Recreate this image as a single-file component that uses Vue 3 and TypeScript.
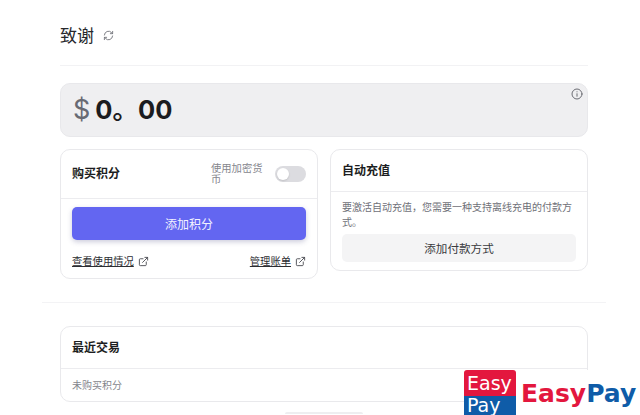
<script setup lang="ts">
const usageLabel: string = '查看使用情况'
const billingLabel: string = '管理账单'
</script>

<template>
  <div class="page">
    <div class="content">
      <header class="head">
        <h1 class="title">致谢</h1>
        <svg class="refresh" viewBox="0 0 24 24" fill="none" stroke="currentColor" stroke-width="2" stroke-linecap="round" stroke-linejoin="round">
          <path d="M3 11a9 9 0 0 1 15.5-5.5L21 8" />
          <path d="M21 3v5h-5" />
          <path d="M21 13a9 9 0 0 1-15.5 5.5L3 16" />
          <path d="M3 21v-5h5" />
        </svg>
      </header>

      <section class="balance">
        <span class="currency">$</span>
        <span class="amount">0。00</span>
        <svg class="info" viewBox="0 0 24 24" fill="none" stroke="currentColor" stroke-width="2" stroke-linecap="round">
          <circle cx="12" cy="12" r="10" />
          <path d="M12 11.5v5" />
          <path d="M12 7.5v.2" />
        </svg>
      </section>

      <div class="cards">
        <section class="card">
          <div class="card-head buy-head">
            <h2 class="card-title">购买积分</h2>
            <div class="crypto">
              <span class="crypto-label">使用加密货币</span>
              <span class="switch"><span class="knob"></span></span>
            </div>
          </div>
          <div class="buy-body">
            <button class="primary" type="button">添加积分</button>
            <div class="links">
              <a class="link">
                <span class="link-text">{{ usageLabel }}</span>
                <svg class="ext" viewBox="0 0 24 24" fill="none" stroke="currentColor" stroke-width="2" stroke-linecap="round" stroke-linejoin="round">
                  <path d="M18 13v6a2 2 0 0 1-2 2H5a2 2 0 0 1-2-2V8a2 2 0 0 1 2-2h6" />
                  <path d="M15 3h6v6" />
                  <path d="M10 14 21 3" />
                </svg>
              </a>
              <a class="link">
                <span class="link-text">{{ billingLabel }}</span>
                <svg class="ext" viewBox="0 0 24 24" fill="none" stroke="currentColor" stroke-width="2" stroke-linecap="round" stroke-linejoin="round">
                  <path d="M18 13v6a2 2 0 0 1-2 2H5a2 2 0 0 1-2-2V8a2 2 0 0 1 2-2h6" />
                  <path d="M15 3h6v6" />
                  <path d="M10 14 21 3" />
                </svg>
              </a>
            </div>
          </div>
        </section>

        <section class="card auto-card">
          <div class="card-head auto-head">
            <h2 class="card-title">自动充值</h2>
          </div>
          <div class="auto-body">
            <p class="auto-text">要激活自动充值，您需要一种支持离线充电的付款方式。</p>
            <button class="secondary" type="button">添加付款方式</button>
          </div>
        </section>
      </div>
    </div>

    <hr class="wide-rule" />

    <div class="content">
      <section class="card tx">
        <div class="card-head tx-head">
          <h2 class="card-title">最近交易</h2>
        </div>
        <p class="tx-empty">未购买积分</p>
      </section>
      <div class="stub"></div>
    </div>

    <div class="brand">
      <div class="badge">
        <span class="badge-top">Easy</span>
        <span class="badge-bottom">Pay</span>
      </div>
      <span class="word"><span class="word-easy">Easy</span><span class="word-pay">Pay</span></span>
    </div>
  </div>
</template>

<style>
html, body {
  margin: 0;
  background: #fff;
  overflow: hidden;
}
</style>

<style scoped>
* { box-sizing: border-box; }

.page {
  position: relative;
  width: 640px;
  height: 415px;
  overflow: hidden;
  background: #fff;
  color: #1f2024;
  font-family: "Inter", "Noto Sans CJK SC", sans-serif;
}

.content {
  width: 528px;
  margin-left: 60px;
}

.head {
  display: flex;
  align-items: center;
  gap: 9px;
  height: 66px;
  padding-top: 6px;
  border-bottom: 1px solid #f2f2f4;
}

.title {
  margin: 0;
  font-size: 17px;
  font-weight: 400;
  line-height: 24px;
  color: #27282c;
}

.refresh {
  width: 11px;
  height: 11px;
  color: #74757c;
}

.balance {
  position: relative;
  display: flex;
  align-items: center;
  gap: 5px;
  height: 54px;
  margin-top: 17px;
  padding-left: 12px;
  background: #efeff1;
  border: 1px solid #e8e8eb;
  border-radius: 10px;
}

.currency {
  font-size: 27px;
  line-height: 32px;
  color: #686a73;
}

.amount {
  font-size: 25.5px;
  font-weight: 700;
  line-height: 32px;
  color: #1b1c20;
}

.info {
  position: absolute;
  top: 4px;
  right: 4px;
  width: 12px;
  height: 12px;
  color: #6b6c73;
}

.cards {
  display: grid;
  grid-template-columns: 258px 258px;
  grid-template-rows: 130px;
  gap: 12px;
  margin-top: 12px;
}

.card {
  background: #fff;
  border: 1px solid #e9e9ec;
  border-radius: 10px;
}

.auto-card {
  height: 122px;
}

.card-head {
  display: flex;
  align-items: center;
  justify-content: space-between;
  padding: 0 11px;
  border-bottom: 1px solid #ececef;
}

.buy-head { height: 49px; }
.auto-head { height: 42px; }
.tx-head { height: 42px; }

.card-title {
  margin: 0;
  font-size: 12px;
  font-weight: 700;
  line-height: 16px;
  color: #1c1d21;
}

.crypto {
  display: flex;
  align-items: center;
  gap: 11px;
}

.crypto-label {
  width: 53px;
  font-size: 10.3px;
  line-height: 11px;
  color: #85868d;
}

.switch {
  position: relative;
  display: block;
  width: 31px;
  height: 16px;
  border-radius: 8px;
  background: #dcdce0;
}

.knob {
  position: absolute;
  top: 2px;
  left: 2px;
  width: 12px;
  height: 12px;
  border-radius: 50%;
  background: #fff;
  box-shadow: 0 1px 2px rgba(0, 0, 0, 0.12);
}

.buy-body {
  padding: 8px 11px 0;
}

.primary {
  display: block;
  width: 100%;
  height: 33px;
  border: 0;
  border-radius: 5px;
  background: #6366f1;
  color: #f3f3ff;
  font: inherit;
  font-size: 12px;
  box-shadow: 0 2px 5px rgba(60, 60, 120, 0.25);
}

.links {
  display: flex;
  justify-content: space-between;
  margin-top: 14px;
}

.link {
  display: flex;
  align-items: center;
  gap: 4px;
  font-size: 10.3px;
  line-height: 14px;
  color: #2c2d32;
}

.link-text {
  text-decoration: underline;
}

.ext {
  width: 11px;
  height: 11px;
  color: #4a4b52;
}

.auto-body {
  padding: 8px 11px 0;
}

.auto-text {
  margin: 0;
  font-size: 10px;
  line-height: 15px;
  color: #6f7078;
}

.secondary {
  display: block;
  width: 100%;
  height: 28px;
  margin-top: 4px;
  border: 0;
  border-radius: 5px;
  background: #f4f4f5;
  color: #3a3b40;
  font: inherit;
  font-size: 11.6px;
}

.wide-rule {
  width: 564px;
  height: 1px;
  margin: 23px 0 23px 42px;
  border: 0;
  background: #f3f3f5;
}

.tx {
  height: 76px;
}

.tx-empty {
  margin: 0;
  padding: 9px 11px;
  font-size: 10px;
  line-height: 14px;
  color: #85868d;
}

.stub {
  width: 78px;
  height: 2px;
  margin: 10px auto 0;
  background: #eeeef0;
  border-radius: 4px 4px 0 0;
}

.brand {
  position: absolute;
  left: 464px;
  top: 370px;
  display: flex;
  align-items: center;
  gap: 5px;
  height: 45px;
  background: #fff;
  padding-right: 3px;
}

.badge {
  display: flex;
  flex-direction: column;
  width: 52px;
  height: 45px;
  border-radius: 3px 3px 0 0;
  overflow: hidden;
  font-family: "DejaVu Sans", sans-serif;
  font-size: 19px;
  color: #fff;
}

.badge-top {
  height: 26px;
  padding: 2px 0 0 3px;
  line-height: 22px;
  background: #e3173e;
}

.badge-bottom {
  height: 19px;
  padding: 0 0 0 3px;
  line-height: 18px;
  background: #0f5ca8;
}

.word {
  padding-top: 2px;
  font-family: "DejaVu Sans", sans-serif;
  font-size: 25px;
  font-weight: 700;
  line-height: 30px;
}

.word-easy { color: #e3173e; }
.word-pay { color: #0f5ca8; }
</style>
